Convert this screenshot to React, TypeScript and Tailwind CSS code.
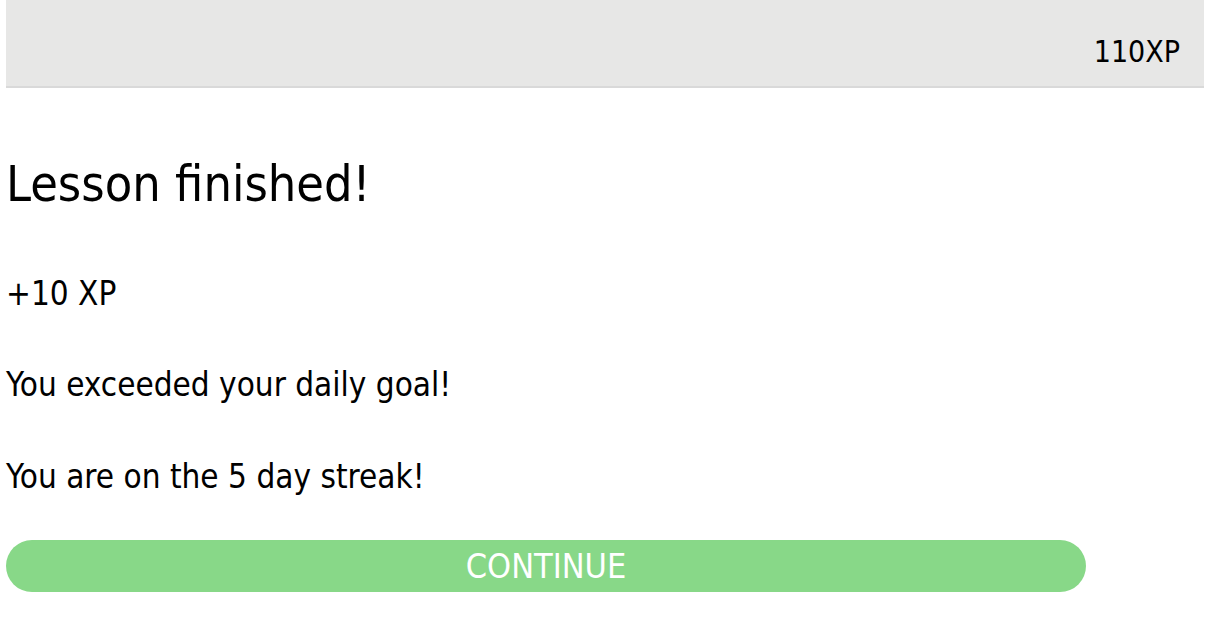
export default function App() {
  return (
    <div className="min-h-[622px] bg-white px-[6px] text-black" style={{ fontFamily: '"DejaVu Sans Condensed", "Liberation Sans", sans-serif' }}>
      {/* Top bar with XP */}
      <header className="flex h-[88px] items-start justify-end border-b-2 border-[#d9d9d9] bg-[#e7e7e6] pr-[24px] pt-[37px]">
        <span className="text-[30px] leading-[30px]">110XP</span>
      </header>

      <main className="pt-[61px]">
        <h1 className="text-[50px] leading-[70px]">Lesson finished!</h1>
        <p className="mt-[52px] text-[33px] leading-[46px]">+10 XP</p>
        <p className="mt-[45px] text-[33px] leading-[46px]">You exceeded your daily goal!</p>
        <p className="mt-[46px] text-[33px] leading-[46px]">You are on the 5 day streak!</p>
        <button className="mt-[40px] flex h-[52px] w-[1080px] items-center justify-center rounded-full bg-[#88d888] text-[34px] text-white">
          CONTINUE
        </button>
      </main>
    </div>
  );
}
